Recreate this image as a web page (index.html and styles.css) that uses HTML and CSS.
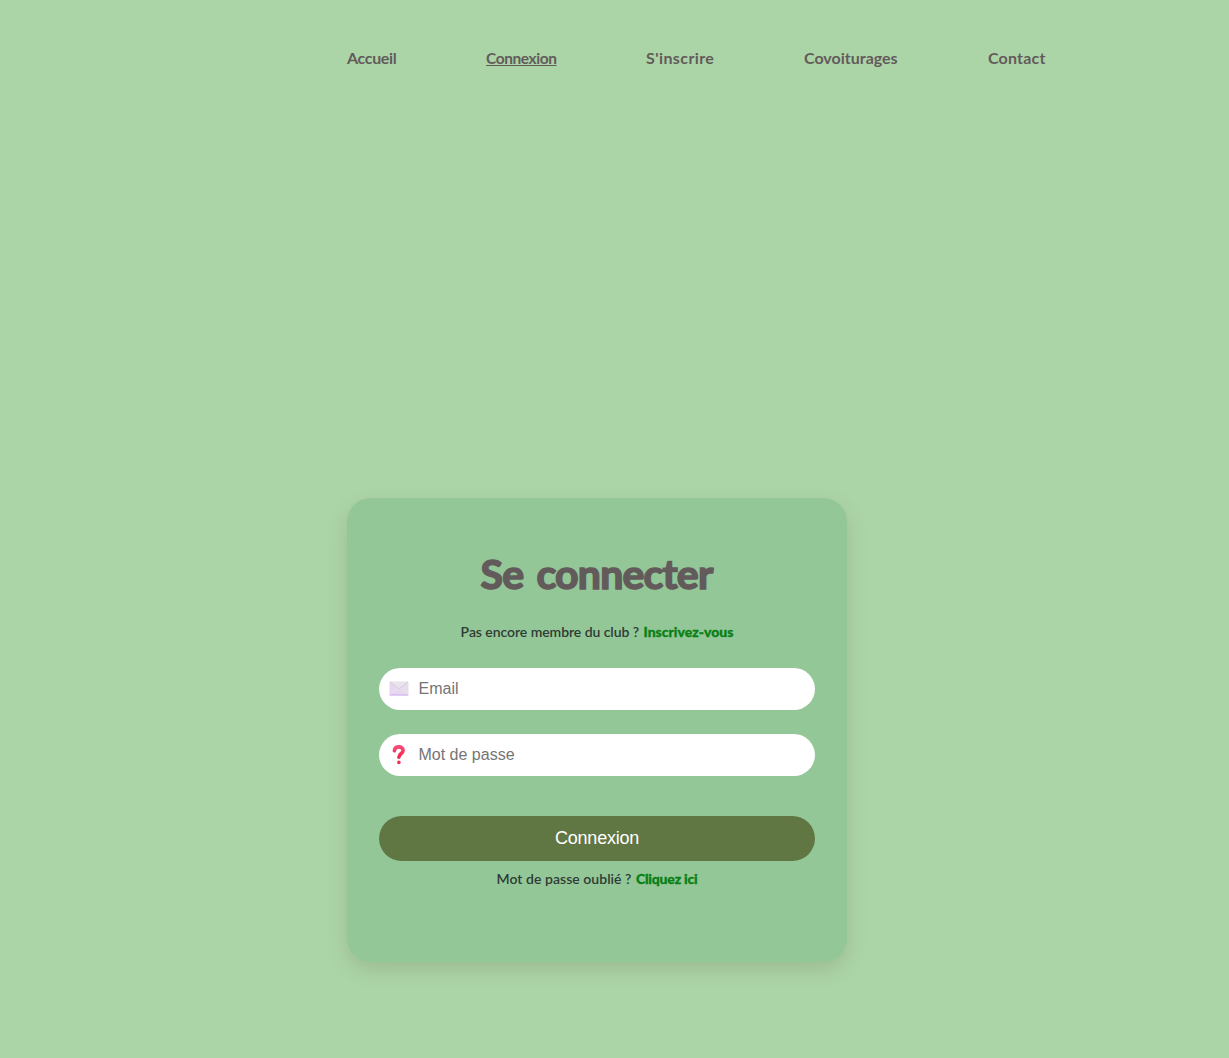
FILE: index.html
```html
<!DOCTYPE html>
<html lang="fr">
<head>
<meta charset="utf-8">
<title>Se connecter</title>
<link rel="stylesheet" href="styles.css">
</head>
<body>
<header>
  <nav class="menu">
    <a class="accueil" href="#">Accueil</a>
    <a class="connexion active" href="#">Connexion</a>
    <a class="inscrire" href="#">S'inscrire</a>
    <a class="covoiturages" href="#">Covoiturages</a>
    <a class="contact" href="#">Contact</a>
  </nav>
</header>
<main>
  <form class="card">
    <h1>Se connecter</h1>
    <p class="note signup"><span>Pas encore membre du club ?</span> <a href="#">Inscrivez-vous</a></p>
    <label class="field">
      <svg width="20" height="20" viewBox="0 0 20 20" aria-hidden="true">
        <defs><linearGradient id="paper" x1="1" y1="0" x2="0" y2="1"><stop offset="0" stop-color="#e6e2e9"/><stop offset="1" stop-color="#e5d2f2"/></linearGradient></defs>
        <rect x="0.5" y="2.5" width="19" height="14" rx="0.6" fill="url(#paper)"/>
        <path d="M.8 16h18.4" stroke="#d0b0f0" stroke-width="1"/>
        <path d="M1 15l7-5.3M19 15l-7-5.3" stroke="#efe4f5" stroke-width=".8"/>
        <path d="M1 3l8 6.2q1 .6 2 0l8-6.2" fill="#e9e3ec" stroke="#d3c3da" stroke-width=".8"/>
      </svg>
      <input type="email" placeholder="Email">
    </label>
    <label class="field">
      <svg width="20" height="20" viewBox="0 0 20 20" aria-hidden="true">
        <defs><linearGradient id="mark" x1="0" y1="0" x2="0" y2="1"><stop offset="0" stop-color="#fa4a78"/><stop offset="1" stop-color="#ef2849"/></linearGradient></defs>
        <path d="M5.4 5.7C5.7 3.1 7.6 1.9 10 1.9c2.4 0 4.1 1.5 4.1 3.6 0 3.2-4.2 2.9-4.2 6.8" fill="none" stroke="url(#mark)" stroke-width="3.6" stroke-linecap="round"/>
        <circle cx="9.9" cy="17.4" r="1.8" fill="#f22f52"/>
      </svg>
      <input type="password" placeholder="Mot de passe">
    </label>
    <button type="button">Connexion</button>
    <p class="note forgot"><span>Mot de passe oublié ?</span> <a href="#">Cliquez ici</a></p>
  </form>
</main>
</body>
</html>
```
FILE: styles.css
```css
* { box-sizing: border-box; }
body {
  margin: 0;
  min-height: 1058px;
  background: #acd5a7;
  color: #2f3b35;
  font-family: Lato, sans-serif;
}
header { height: 498px; padding: 46px 0 0 347px; }
.menu { display: flex; gap: 90px; }
.menu a {
  color: #635b5b;
  font-size: 16px;
  font-weight: 700;
  line-height: 24px;
  white-space: nowrap;
  text-decoration: none;
}
.menu .active { text-decoration: underline; }
.menu .accueil { width: 49px; letter-spacing: -.35px; }
.menu .connexion { width: 70px; font-size: 15.5px; letter-spacing: -.42px; }
.menu .inscrire { width: 68px; letter-spacing: .4px; }
.menu .covoiturages { width: 94px; }
.menu .contact { width: 57px; letter-spacing: .2px; }

.card {
  width: 500px;
  height: 464px;
  margin-left: 347px;
  padding: 48px 32px 0;
  border-radius: 24px;
  background: #93c797;
  box-shadow: 0 8px 20px rgba(98, 91, 60, .2);
  display: flex;
  flex-direction: column;
}
h1 {
  margin: 0 1px 0 0;
  height: 56px;
  color: #635b5b;
  font-size: 41px;
  font-weight: 700;
  line-height: 56px;
  letter-spacing: -.8px;
  word-spacing: 4px;
  text-align: center;
  -webkit-text-stroke: 1.6px #635b5b;
}
.note {
  margin: 0;
  font-size: 14px;
  font-weight: 600;
  line-height: 20px;
  text-align: center;
  white-space: nowrap;
}
.note span { letter-spacing: -.06px; }
.note a {
  color: #088014;
  font-weight: 900;
  text-decoration: none;
  -webkit-text-stroke: .3px #088014;
}
.signup { margin: 20px 0 26px; }
.signup a { margin-left: 1px; }
.forgot span { letter-spacing: .04px; }
.forgot a { margin-left: 1px; letter-spacing: -.2px; }
.field {
  display: flex;
  align-items: center;
  gap: 9.5px;
  height: 42px;
  margin-bottom: 24px;
  padding: 0 11px 0 10px;
  border-radius: 21px;
  background: #fff;
}
.field svg { flex: none; }
.field input {
  flex: 1;
  min-width: 0;
  padding: 0;
  border: 0;
  outline: 0;
  background: none;
  font: 16px "Liberation Sans", Arial, sans-serif;
}
.field input::placeholder { color: #757575; }
button {
  height: 45px;
  margin-top: 16px;
  border: 0;
  border-radius: 23px;
  background: #617743;
  color: #fff;
  font: 18px "Liberation Sans", Arial, sans-serif;
  letter-spacing: -.25px;
}
.forgot { margin-top: 8px; }
```
